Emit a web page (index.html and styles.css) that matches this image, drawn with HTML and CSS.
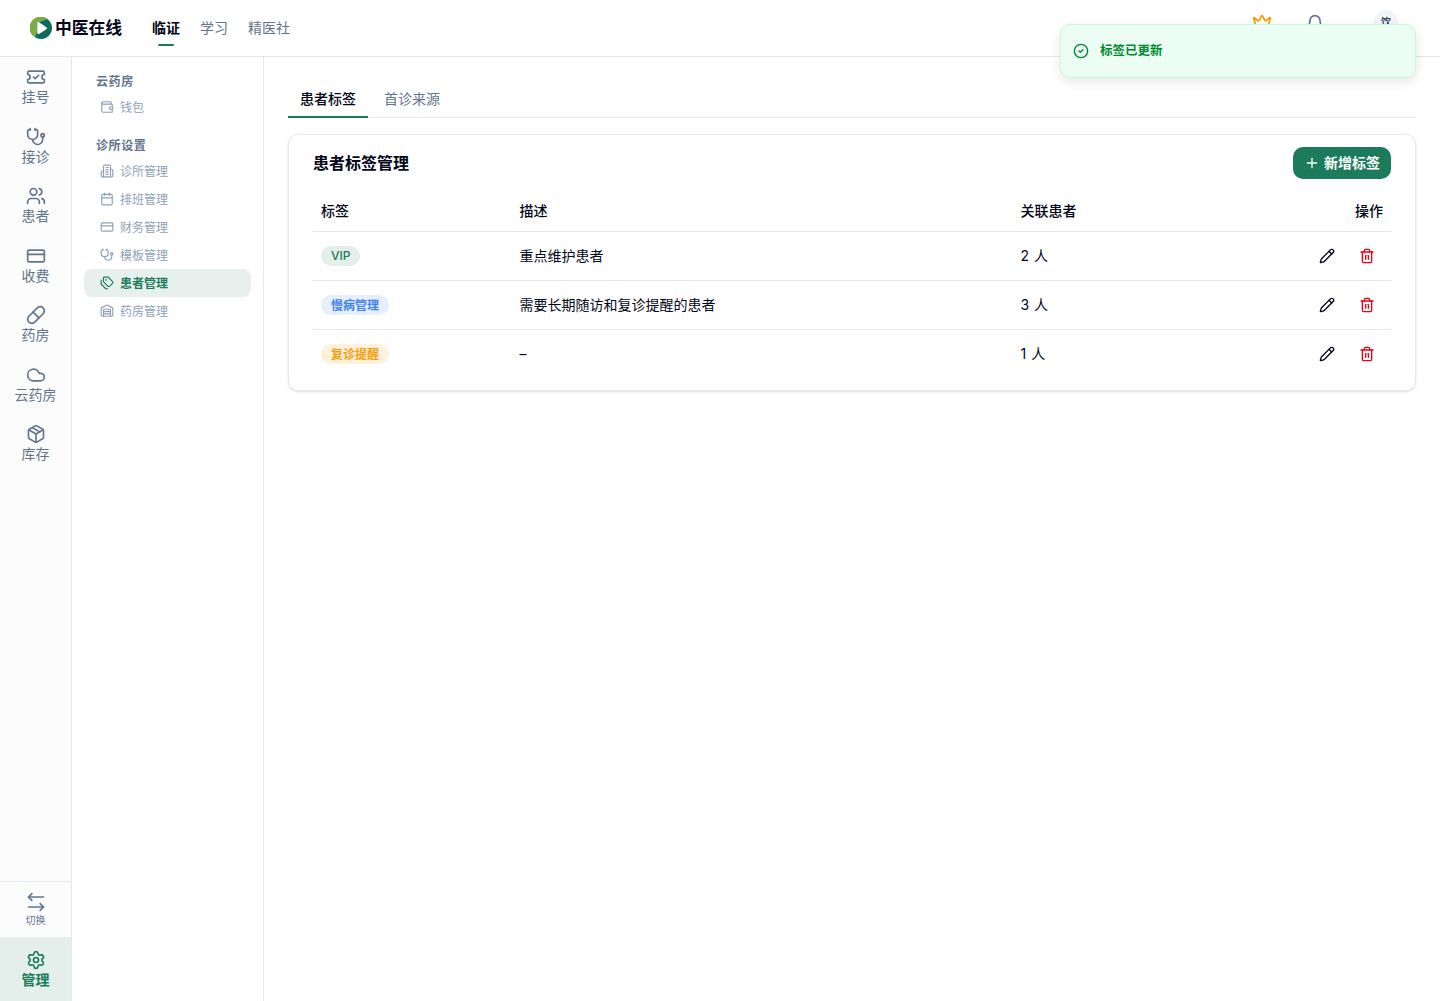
FILE: index.html
```html
<!DOCTYPE html>
<html lang="zh-CN">
<head>
  <meta charset="UTF-8">
  <title>患者标签管理 - 中医在线</title>
  <meta name="viewport" content="width=device-width, initial-scale=1.0">
  <link rel="stylesheet" href="styles.css">
</head>
<body>
  <!-- shared icons -->
  <svg width="0" height="0" class="sprite">
    <symbol id="i-card" viewBox="0 0 24 24"><rect width="20" height="14" x="2" y="5" rx="2"/><path d="M2 10h20"/></symbol>
    <symbol id="i-steth" viewBox="0 0 24 24"><path d="M11 2v2"/><path d="M5 2v2"/><path d="M5 3H4a2 2 0 0 0-2 2v4a6 6 0 0 0 12 0V5a2 2 0 0 0-2-2h-1"/><path d="M8 15a6 6 0 0 0 12 0v-3"/><circle cx="20" cy="10" r="2"/></symbol>
    <symbol id="i-pencil" viewBox="0 0 24 24"><path d="M21.174 6.812a1 1 0 0 0-3.986-3.987L3.842 16.174a2 2 0 0 0-.5.83l-1.321 4.352a.5.5 0 0 0 .623.622l4.353-1.32a2 2 0 0 0 .83-.497z"/><path d="m15 5 4 4"/></symbol>
    <symbol id="i-trash" viewBox="0 0 24 24"><path d="M3 6h18"/><path d="M19 6v14a2 2 0 0 1-2 2H7a2 2 0 0 1-2-2V6"/><path d="M8 6V4a2 2 0 0 1 2-2h4a2 2 0 0 1 2 2v2"/><path d="M10 11v6"/><path d="M14 11v6"/></symbol>
  </svg>

  <header>
    <a class="logo" href="#">
      <svg class="logo-mark" viewBox="0 0 22 22">
        <circle cx="11" cy="11" r="11" fill="#0f6b5c"/>
        <path d="M17.500 2.200A11 11 0 1 0 5.500 20.500C6 18 6.500 16 7.500 14L7 7C9 4.500 13 3.500 17.500 2.200z" fill="#7cab48"/>
        <path d="M7.300 6.300v9.600c0 1 .9 1.500 1.700 1l7.300-4.600c.8-.5.8-1.600 0-2.100L9 5.300c-.8-.500-1.700 0-1.700 1z" fill="#fff"/>
      </svg>
      <span>中医在线</span>
    </a>
    <nav>
      <a class="active" href="#">临证</a>
      <a href="#">学习</a>
      <a href="#">精医社</a>
    </nav>
    <div class="user-tools">
      <svg class="icon crown" viewBox="0 0 24 24"><path d="M11.562 3.266a.5.5 0 0 1 .876 0L15.390 8.870a1 1 0 0 0 1.516.294L21.183 5.500a.5.5 0 0 1 .798.519l-2.834 10.246a1 1 0 0 1-.956.734H5.810a1 1 0 0 1-.957-.734L2.020 6.020a.5.5 0 0 1 .798-.519l4.276 3.664a1 1 0 0 0 1.516-.294z"/><path d="M5 21h14"/></svg>
      <svg class="icon bell" viewBox="0 0 24 24"><path d="M10.268 21a2 2 0 0 0 3.464 0"/><path d="M3.262 15.326A1 1 0 0 0 4 17h16a1 1 0 0 0 .740-1.673C19.410 13.956 18 12.499 18 8A6 6 0 0 0 6 8c0 4.499-1.411 5.956-2.738 7.326"/></svg>
      <div class="avatar">饮</div>
    </div>
  </header>

  <div class="layout">
    <aside class="rail">
      <a href="#"><svg class="icon" viewBox="0 0 24 24"><path d="M2 9a3 3 0 1 1 0 6v2a2 2 0 0 0 2 2h16a2 2 0 0 0 2-2v-2a3 3 0 1 1 0-6V7a2 2 0 0 0-2-2H4a2 2 0 0 0-2 2Z"/><path d="m9 12 2 2 4-4"/></svg>挂号</a>
      <a href="#"><svg class="icon"><use href="#i-steth"/></svg>接诊</a>
      <a href="#"><svg class="icon" viewBox="0 0 24 24"><path d="M16 21v-2a4 4 0 0 0-4-4H6a4 4 0 0 0-4 4v2"/><path d="M16 3.128a4 4 0 0 1 0 7.744"/><path d="M22 21v-2a4 4 0 0 0-3-3.870"/><circle cx="9" cy="7" r="4"/></svg>患者</a>
      <a href="#"><svg class="icon"><use href="#i-card"/></svg>收费</a>
      <a href="#"><svg class="icon" viewBox="0 0 24 24"><path d="m10.500 20.500 10-10a4.950 4.950 0 1 0-7-7l-10 10a4.950 4.950 0 1 0 7 7Z"/><path d="m8.500 8.500 7 7"/></svg>药房</a>
      <a href="#"><svg class="icon" viewBox="0 0 24 24"><path d="M17.500 19H9a7 7 0 1 1 6.710-9h1.790a4.500 4.500 0 1 1 0 9Z"/></svg>云药房</a>
      <a href="#"><svg class="icon" viewBox="0 0 24 24"><path d="M11 21.730a2 2 0 0 0 2 0l7-4A2 2 0 0 0 21 16V8a2 2 0 0 0-1-1.730l-7-4a2 2 0 0 0-2 0l-7 4A2 2 0 0 0 3 8v8a2 2 0 0 0 1 1.730z"/><path d="M12 22V12"/><path d="M3.290 7 12 12l8.710-5"/><path d="m7.500 4.270 9 5.150"/></svg>库存</a>
      <div class="rail-bottom">
        <a class="switch" href="#"><svg class="icon" viewBox="0 0 24 24"><path d="m7 2-4 4 4 4"/><path d="M3 6h18"/><path d="m17 14 4 4-4 4"/><path d="M21 18H3"/></svg>切换</a>
        <a class="manage" href="#"><svg class="icon" viewBox="0 0 24 24"><path d="M9.671 4.136a2.340 2.340 0 0 1 4.659 0 2.340 2.340 0 0 0 3.319 1.915 2.340 2.340 0 0 1 2.330 4.033 2.340 2.340 0 0 0 0 3.831 2.340 2.340 0 0 1-2.330 4.033 2.340 2.340 0 0 0-3.319 1.915 2.340 2.340 0 0 1-4.659 0 2.340 2.340 0 0 0-3.320-1.915 2.340 2.340 0 0 1-2.330-4.033 2.340 2.340 0 0 0 0-3.831A2.340 2.340 0 0 1 6.350 6.051a2.340 2.340 0 0 0 3.319-1.915"/><circle cx="12" cy="12" r="3"/></svg>管理</a>
      </div>
    </aside>

    <aside class="sidebar">
      <h3>云药房</h3>
      <a href="#"><svg class="icon" viewBox="0 0 24 24"><path d="M19 7V4a1 1 0 0 0-1-1H5a2 2 0 0 0 0 4h15a1 1 0 0 1 1 1v4h-3a2 2 0 0 0 0 4h3a1 1 0 0 0 1-1v-2a1 1 0 0 0-1-1"/><path d="M3 5v14a2 2 0 0 0 2 2h15a1 1 0 0 0 1-1v-4"/></svg>钱包</a>
      <h3>诊所设置</h3>
      <a href="#"><svg class="icon" viewBox="0 0 24 24"><path d="M6 22V4a2 2 0 0 1 2-2h8a2 2 0 0 1 2 2v18Z"/><path d="M6 12H4a2 2 0 0 0-2 2v6a2 2 0 0 0 2 2h2"/><path d="M18 9h2a2 2 0 0 1 2 2v9a2 2 0 0 1-2 2h-2"/><path d="M10 6h4"/><path d="M10 10h4"/><path d="M10 14h4"/><path d="M10 18h4"/></svg>诊所管理</a>
      <a href="#"><svg class="icon" viewBox="0 0 24 24"><path d="M8 2v4"/><path d="M16 2v4"/><rect width="18" height="18" x="3" y="4" rx="2"/><path d="M3 10h18"/></svg>排班管理</a>
      <a href="#"><svg class="icon"><use href="#i-card"/></svg>财务管理</a>
      <a href="#"><svg class="icon"><use href="#i-steth"/></svg>模板管理</a>
      <a class="active" href="#"><svg class="icon" viewBox="0 0 24 24"><path d="M13.172 2a2 2 0 0 1 1.414.586l6.710 6.710a2.400 2.400 0 0 1 0 3.408l-4.592 4.592a2.400 2.400 0 0 1-3.408 0l-6.710-6.710A2 2 0 0 1 6 9.172V3a1 1 0 0 1 1-1z"/><path d="M2 7v6.172a2 2 0 0 0 .586 1.414l6.710 6.710a2.400 2.400 0 0 0 3.191.193"/><circle cx="10.500" cy="6.500" r=".5" fill="currentColor"/></svg>患者管理</a>
      <a href="#"><svg class="icon" viewBox="0 0 24 24"><path d="M18 21V10a1 1 0 0 0-1-1H7a1 1 0 0 0-1 1v11"/><path d="M22 19a2 2 0 0 1-2 2H4a2 2 0 0 1-2-2V8a2 2 0 0 1 1.132-1.803l7.950-3.974a2 2 0 0 1 1.837 0l7.948 3.974A2 2 0 0 1 22 8z"/><path d="M6 13h12"/><path d="M6 17h12"/></svg>药房管理</a>
    </aside>

    <main>
      <div class="tabs">
        <a class="active" href="#">患者标签</a>
        <a href="#">首诊来源</a>
      </div>

      <section class="card">
        <div class="card-header">
          <h2>患者标签管理</h2>
          <button class="add-btn"><svg class="icon" viewBox="0 0 24 24"><path d="M5 12h14"/><path d="M12 5v14"/></svg>新增标签</button>
        </div>
        <table>
          <thead>
            <tr>
              <th class="col-tag">标签</th>
              <th class="col-desc">描述</th>
              <th>关联患者</th>
              <th class="col-actions">操作</th>
            </tr>
          </thead>
          <tbody>
            <tr>
              <td><span class="badge green">VIP</span></td>
              <td>重点维护患者</td>
              <td class="count">2 人</td>
              <td><div class="actions"><button><svg class="icon"><use href="#i-pencil"/></svg></button><button class="delete"><svg class="icon"><use href="#i-trash"/></svg></button></div></td>
            </tr>
            <tr>
              <td><span class="badge blue">慢病管理</span></td>
              <td>需要长期随访和复诊提醒的患者</td>
              <td class="count">3 人</td>
              <td><div class="actions"><button><svg class="icon"><use href="#i-pencil"/></svg></button><button class="delete"><svg class="icon"><use href="#i-trash"/></svg></button></div></td>
            </tr>
            <tr>
              <td><span class="badge orange">复诊提醒</span></td>
              <td>–</td>
              <td class="count">1 人</td>
              <td><div class="actions"><button><svg class="icon"><use href="#i-pencil"/></svg></button><button class="delete"><svg class="icon"><use href="#i-trash"/></svg></button></div></td>
            </tr>
          </tbody>
        </table>
      </section>
    </main>
  </div>

  <div class="toast">
    <svg class="icon" viewBox="0 0 24 24"><circle cx="12" cy="12" r="10"/><path d="m9 12 2 2 4-4"/></svg>
    <span>标签已更新</span>
  </div>
</body>
</html>
```

FILE: styles.css
```css
* {
  box-sizing: border-box;
}
html, body {
  margin: 0;
  padding: 0;
  height: 100%;
}
body {
  display: flex;
  flex-direction: column;
  font-family: Inter, 'Noto Sans CJK SC', sans-serif;
  font-size: 14px;
  line-height: 20px;
  background: #fff;
  color: #020618;
}
a {
  color: inherit;
  text-decoration: none;
}
button {
  font: inherit;
  color: inherit;
  border: none;
  background: none;
  padding: 0;
}
.sprite {
  position: absolute;
}
.icon {
  width: 20px;
  height: 20px;
  flex: none;
  fill: none;
  stroke: currentColor;
  stroke-width: 2;
  stroke-linecap: round;
  stroke-linejoin: round;
}
header {
  display: flex;
  align-items: center;
  flex: none;
  height: 57px;
  padding: 0 42px 0 30px;
  border-bottom: 1px solid #e2e8f0;
}
.logo {
  display: flex;
  align-items: center;
  gap: 3px;
  width: 122px;
  font-size: 16.8px;
  font-weight: 600;
}
.logo-mark {
  width: 22px;
  height: 22px;
}
nav {
  display: flex;
  gap: 20px;
  color: #62748e;
}
nav a {
  position: relative;
}
nav .active {
  color: #020618;
  font-weight: 600;
}
nav .active::after {
  content: '';
  position: absolute;
  left: 6px;
  bottom: -8px;
  width: 16px;
  height: 2px;
  border-radius: 2px;
  background: #1b7b5a;
}
.user-tools {
  display: flex;
  align-items: flex-start;
  margin-left: auto;
  height: 36px;
}
.crown {
  margin: 3px 32.5px 0 0;
  color: #fe9a00;
}
.bell {
  margin: 4px 49.5px 0 0;
  color: #62748e;
}
.avatar {
  width: 24px;
  height: 24px;
  border-radius: 50%;
  background: #f1f5f9;
  color: #314158;
  font-size: 10px;
  line-height: 24px;
  font-weight: 600;
  text-align: center;
}
.layout {
  display: flex;
  flex: 1;
}
.rail {
  display: flex;
  flex-direction: column;
  width: 72px;
  border-right: 1px solid #e2e8f0;
  background: #fcfcfc;
  color: #62748e;
}
.rail a {
  display: flex;
  flex-direction: column;
  align-items: center;
  padding: 10px 0;
  line-height: 19.5px;
}
.rail-bottom {
  margin-top: auto;
  border-top: 1px solid #e2e8f0;
}
.rail .switch {
  height: 55px;
  font-size: 10px;
  line-height: 17px;
}
.rail .manage {
  height: 64px;
  padding: 13px 0 0;
  background: #e4eeeb;
  color: #1b7b5a;
  font-weight: 600;
}
.sidebar {
  width: 192px;
  padding: 12px;
  border-right: 1px solid #e2e8f0;
  font-size: 12px;
  color: #90a1b9;
}
.sidebar h3 {
  margin: 0;
  padding: 5px 12px 3px;
  font-size: 12px;
  line-height: 16px;
  font-weight: 600;
  letter-spacing: 0.6px;
  color: #62748e;
}
.sidebar a {
  display: flex;
  align-items: center;
  gap: 6px;
  height: 28px;
  padding: 2px 16px 0;
  border-radius: 8px;
}
.sidebar a + h3 {
  margin-top: 12px;
}
.sidebar .icon {
  width: 14px;
  height: 14px;
  margin-bottom: 2px;
}
.sidebar .active {
  background: #e8f0ed;
  color: #1b7b5a;
  font-weight: 600;
}
main {
  flex: 1;
  padding: 24px;
}
.tabs {
  display: flex;
  gap: 4px;
  height: 37px;
  margin-bottom: 16px;
  border-bottom: 1px solid #e2e8f0;
  color: #62748e;
}
.tabs a {
  height: 37px;
  padding: 8px 12px;
}
.tabs .active {
  border-bottom: 2px solid #1b7b5a;
  color: #020618;
  font-weight: 500;
}
.card {
  padding: 12px 24px;
  border: 1px solid #e2e8f0;
  border-radius: 10px;
  box-shadow: 0 1px 3px rgba(0, 0, 0, 0.1), 0 1px 2px -1px rgba(0, 0, 0, 0.1);
}
.card-header {
  display: flex;
  align-items: center;
  justify-content: space-between;
  margin-bottom: 12px;
}
.card-header h2 {
  margin: 0;
  font-size: 16px;
  line-height: 24px;
  font-weight: 600;
}
.add-btn {
  display: flex;
  align-items: center;
  gap: 4px;
  height: 32px;
  padding: 0 11px;
  border-radius: 10px;
  background: #1b7b5a;
  color: #fff;
  font-weight: 600;
}
.card .icon {
  width: 16px;
  height: 16px;
}
table {
  width: 100%;
  table-layout: fixed;
  border-collapse: separate;
  border-spacing: 0;
}
th {
  height: 41px;
  padding: 0 8px;
  border-bottom: 1px solid #e2e8f0;
  text-align: left;
  font-weight: 500;
}
td {
  height: 49px;
  padding: 8px;
  border-bottom: 1px solid #e2e8f0;
}
tbody tr:last-child td {
  height: 48px;
  border-bottom: none;
}
.col-tag {
  width: 198.5px;
}
.col-desc {
  width: 501px;
}
.col-actions {
  text-align: right;
}
.count {
  word-spacing: 1px;
}
.badge {
  display: block;
  width: fit-content;
  height: 20px;
  padding: 0 10px;
  border-radius: 10px;
  font-size: 12px;
  line-height: 20px;
  font-weight: 600;
}
.green {
  background: #e4efeb;
  color: #1b7b5a;
  font-weight: 500;
}
.blue {
  background: #e6eeff;
  color: #3b82f6;
  line-height: 22px;
}
.orange {
  background: #fff1dc;
  color: #f59e0b;
  line-height: 22px;
}
.actions {
  display: flex;
  justify-content: flex-end;
  gap: 8px;
}
.actions button {
  display: flex;
  align-items: center;
  justify-content: center;
  width: 32px;
  height: 32px;
}
.actions .delete {
  color: #ee0010;
}
.toast {
  position: absolute;
  top: 24px;
  right: 24px;
  display: flex;
  align-items: center;
  gap: 11px;
  width: 356px;
  height: 54px;
  padding: 0 12px;
  border: 1px solid #bffcd9;
  border-radius: 10px;
  background: #ecfdf3;
  color: #008a2e;
  font-size: 12.5px;
  font-weight: 600;
  box-shadow: 0 4px 12px rgba(0, 0, 0, 0.1);
}
.toast .icon {
  width: 16px;
  height: 16px;
}
```
